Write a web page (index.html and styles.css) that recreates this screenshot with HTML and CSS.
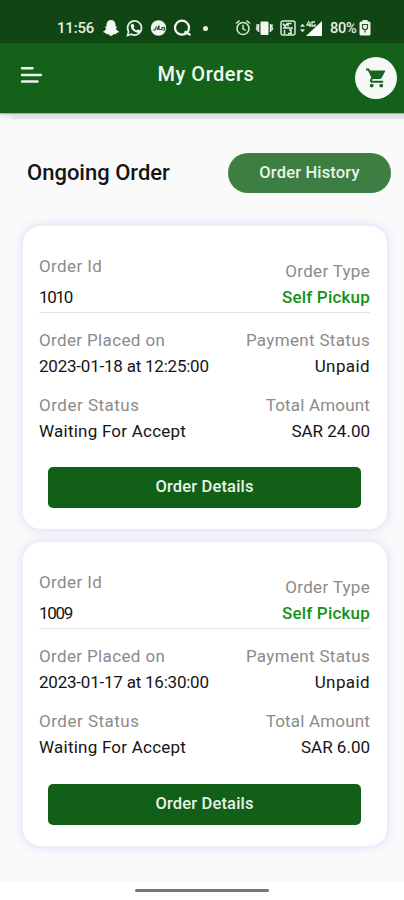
FILE: index.html
```html
<!DOCTYPE html>
<html lang="en">
<head>
<meta charset="utf-8">
<title>My Orders</title>
<link rel="stylesheet" href="styles.css">
</head>
<body>
<div class="status">
  <span class="time">11:56</span>
  <svg class="notif" width="94" height="18" viewBox="0 0 94 18" fill="none">
    <path fill="#f4f8f3" d="M8 1c3 0 4.500 2 4.500 5v1.500l1.800.2-1.300 1.600c.5 1.800 1.500 2.800 3 3.300-.4 1-1.200 1.300-2.500 1.400l-.6 1.200-2-.1C9.800 16 9 17 8 17s-1.800-1-2.800-1.900l-2 .1-.6-1.200c-1.300-.1-2.100-.4-2.500-1.400 1.500-.5 2.500-1.500 3-3.300L1.700 7.700l1.800-.2V6C3.500 3 5 1 8 1z"/>
    <path stroke="#e2ebe1" stroke-width="1.700" d="M24.500 16.500l1.100-3.800a7 7 0 1 1 2.700 2.500z"/>
    <path fill="#f4f8f3" d="M28.800 5l1.400-.3 1.200 2.600-.9 1.200c.8 1.500 1.800 2.300 3.200 3l1.200-1.300 2.300 1.300c-.3 2-2 2.600-3.500 2.100-3.300-1-5.500-3.300-6-6 0-1.200.4-2 1.100-2.600z"/>
    <circle cx="55.500" cy="9" r="7.700" fill="#f1f7f0"/>
    <path stroke="#24582a" stroke-width="1.200" d="M50 11h2l1.500-3.500M54 11l2-4.500v4h2.500l1-2.500M59.500 11h2V8.500h-3"/>
    <circle cx="79" cy="8.700" r="7" stroke="#f1f7f0" stroke-width="2.200"/>
    <path stroke="#f1f7f0" stroke-width="2.200" d="M81.500 12.500L87.500 16"/>
  </svg>
  <span class="dot"></span>
  <svg class="sys" width="88" height="18" viewBox="0 0 88 18" fill="none">
    <circle cx="8" cy="9.500" r="6" stroke="#d5e2d5" stroke-width="1.600"/>
    <path stroke="#d5e2d5" stroke-width="1.500" d="M1 4.500L4.500 1.600M15 4.500L11.500 1.600M8 5.800v4l2.700 1.600"/>
    <rect x="25.500" y="2.500" width="8" height="13.500" rx="1" fill="#f4f8f3"/>
    <path stroke="#e0eae0" stroke-width="1.500" d="M23.500 5v8M35.500 5v8M21.500 5.500l1 2-1 2 1 2M37.500 5.500l-1 2 1 2-1 2"/>
    <rect x="46" y="2" width="14" height="14" rx="2" stroke="#dce7dc" stroke-width="1.500"/>
    <path stroke="#e6eee6" stroke-width="1.500" d="M48 4.500l2 3 2-3M53 7.500v-3h3.500M48 9h10M49.500 11v4M54 11h2v4M53 14.500h4"/>
    <path fill="#d8e4d8" d="M67.500 4.500l2.500 3.300h-5zM67.500 13.500l-2.500-3.300h5z"/>
    <path fill="#f8fbf7" d="M87 2v15H71z"/>
    <path stroke="#dce7dc" stroke-width="1.300" d="M74 2l-2 4h4M75 3v5M80 3h-3v4h3V5"/>
  </svg>
  <span class="pct">80%</span>
  <svg class="batt" width="12" height="18" viewBox="0 0 12 18">
    <path fill="#eff5ef" d="M3.500 1h5v1.500H10q1.500 0 1.500 1.500v11q0 1.500-1.500 1.500H2Q.5 16.500.5 15V4Q.5 2.500 2 2.500h1.500z"/>
    <path fill="none" stroke="#23522a" stroke-width="1.200" d="M3.500 5.500v3q0 2 2.500 2t2.500-2v-3zM6 10.500v3"/>
  </svg>
</div>
<header class="bar">
  <svg class="menu" width="22" height="18" viewBox="0 0 22 18" stroke="#eaf5e8" stroke-width="2.500" stroke-linecap="round"><path d="M2 2.300h10.500M2 9h19M2 15.500h15.500"/></svg>
  <h1>My Orders</h1>
  <div class="cart">
    <svg width="20" height="20" viewBox="1 2 21 20" fill="#176323"><path d="M7 18c-1.100 0-1.990.9-1.990 2S5.900 22 7 22s2-.9 2-2-.9-2-2-2zM1 2v2h2l3.600 7.590-1.350 2.450c-.16.28-.25.610-.25.960 0 1.100.9 2 2 2h12v-2H7.420c-.14 0-.25-.11-.25-.25l.03-.12.9-1.630h7.450c.75 0 1.410-.41 1.750-1.030l3.580-6.490A1 1 0 0 0 20.010 4H5.210l-.94-2H1zm16 16c-1.100 0-1.990.9-1.990 2s.89 2 1.990 2 2-.9 2-2-.9-2-2-2z"/></svg>
  </div>
</header>
<main>
  <div class="top">
    <h2>Ongoing Order</h2>
    <button class="history">Order History</button>
  </div>
  <section class="card">
    <div class="row first">
      <dl><dt class="w-id">Order Id</dt><dd class="w-num">1010</dd></dl>
      <dl class="right"><dt class="w-type">Order Type</dt><dd class="pickup">Self Pickup</dd></dl>
    </div>
    <div class="row">
      <dl><dt class="w-placed">Order Placed on</dt><dd class="w-date">2023-01-18 at 12:25:00</dd></dl>
      <dl class="right"><dt class="w-pay">Payment Status</dt><dd class="w-unpaid">Unpaid</dd></dl>
    </div>
    <div class="row">
      <dl><dt class="w-status">Order Status</dt><dd class="w-wait">Waiting For Accept</dd></dl>
      <dl class="right"><dt class="w-total">Total Amount</dt><dd class="w-sar">SAR 24.00</dd></dl>
    </div>
    <button class="details">Order Details</button>
  </section>
  <section class="card">
    <div class="row first">
      <dl><dt class="w-id">Order Id</dt><dd class="w-num">1009</dd></dl>
      <dl class="right"><dt class="w-type">Order Type</dt><dd class="pickup">Self Pickup</dd></dl>
    </div>
    <div class="row">
      <dl><dt class="w-placed">Order Placed on</dt><dd class="w-date">2023-01-17 at 16:30:00</dd></dl>
      <dl class="right"><dt class="w-pay">Payment Status</dt><dd class="w-unpaid">Unpaid</dd></dl>
    </div>
    <div class="row">
      <dl><dt class="w-status">Order Status</dt><dd class="w-wait">Waiting For Accept</dd></dl>
      <dl class="right"><dt class="w-total">Total Amount</dt><dd class="w-sar">SAR 6.00</dd></dl>
    </div>
    <button class="details">Order Details</button>
  </section>
</main>
<footer><span class="home"></span></footer>
</body>
</html>
```

FILE: styles.css
```css
* { box-sizing: border-box; margin: 0; padding: 0; }
body {
  width: 404px; height: 900px; overflow: hidden;
  display: flex; flex-direction: column;
  font-family: Roboto, "Liberation Sans", sans-serif;
  background: #fafafb; color: #151515;
  white-space: nowrap;
}
svg { display: block; flex: none; }
.status {
  flex: none; height: 43px; padding: 13px 0 0 57px;
  display: flex; align-items: center;
  background: #0f4614; color: #e6efe5;
  font-size: 15px; font-weight: 500;
}
.time { width: 46px; letter-spacing: -0.2px; }
.dot { width: 5px; height: 5px; border-radius: 50%; background: #e6efe5; margin: 0 27px 0 6px; }
.pct { width: 30px; margin-left: 7px; font-size: 14.5px; letter-spacing: -0.3px; }
.batt { margin-left: -1px; }
.bar {
  flex: none; height: 70px; padding: 0 7px 6px 20px;
  display: grid; grid-template-columns: 42px 1fr 42px; align-items: center;
  background: #14611a;
  box-shadow: 0 1px 1px rgba(60, 80, 65, .35), 12px 6px 1px #e1e3e5, 0 4px 4px rgba(120, 125, 130, .18);
  z-index: 1;
}
.menu { margin-top: -1px; }
.bar h1 {
  color: #f2f8f0; font-size: 20px; line-height: 24px; font-weight: 500;
  text-align: center; padding-left: 16px; letter-spacing: .5px;
  margin-top: -3px; margin-right: 21px;
}
.cart {
  width: 42px; height: 42px; border-radius: 50%; background: #f6f8f7;
  display: flex; align-items: center; justify-content: center;
  margin-top: 5px;
}
main { flex: 1; padding: 39.500px 17px 0 23px; }
.top {
  display: flex; justify-content: space-between; align-items: center;
  height: 40px; margin: 0 -4px 33px 4px;
}
h2 { font-size: 22px; font-weight: 500; }
button {
  border: 0; font-family: inherit; color: #e9f3e7;
  font-weight: 500; font-size: 16.500px; letter-spacing: .16px;
}
.history { width: 163px; height: 40px; border-radius: 20px; background: #3d7f42; padding-bottom: 1px; }
.card {
  width: 364px; height: 303.500px; margin-bottom: 13px; padding: 29px 17px 0 16px;
  border-radius: 18px; background: #fff;
  box-shadow: 0 0 8px 2px rgba(215, 215, 248, .68);
}
.row { display: flex; justify-content: space-between; margin-bottom: 13px; }
dl { display: flex; flex-direction: column; }
dt, dd { line-height: 26px; font-size: 17px; }
dt { color: #8b8b8b; }
.first { height: 58px; border-bottom: 1px solid #e3e3e3; margin-bottom: 14px; }
.first dl:first-child { gap: 5px; margin-top: -2px; }
.first .right { margin-top: 3px; }
.row + .row { height: 52px; }
.right { align-items: flex-end; }
.pickup { color: #149119; font-weight: 500; letter-spacing: .2px; }
.w-id { letter-spacing: .4px; }
.w-num { letter-spacing: -1.300px; }
.w-type { letter-spacing: .3px; }
.w-placed { letter-spacing: .36px; }
.w-date { letter-spacing: -.22px; }
.w-pay { letter-spacing: .33px; }
.w-unpaid { letter-spacing: .4px; }
.w-status { letter-spacing: .5px; }
.w-wait { letter-spacing: .23px; }
.w-total { letter-spacing: .17px; }
.details {
  display: block; width: 313px; height: 41px; margin: 23.500px 0 0 9px;
  border-radius: 5px; background: #125f17; padding-bottom: 2px;
}
footer { flex: none; height: 18px; background: #fff; display: flex; justify-content: center; padding-top: 7px; }
.home { width: 134px; height: 3px; border-radius: 2px; background: #777; }
```
